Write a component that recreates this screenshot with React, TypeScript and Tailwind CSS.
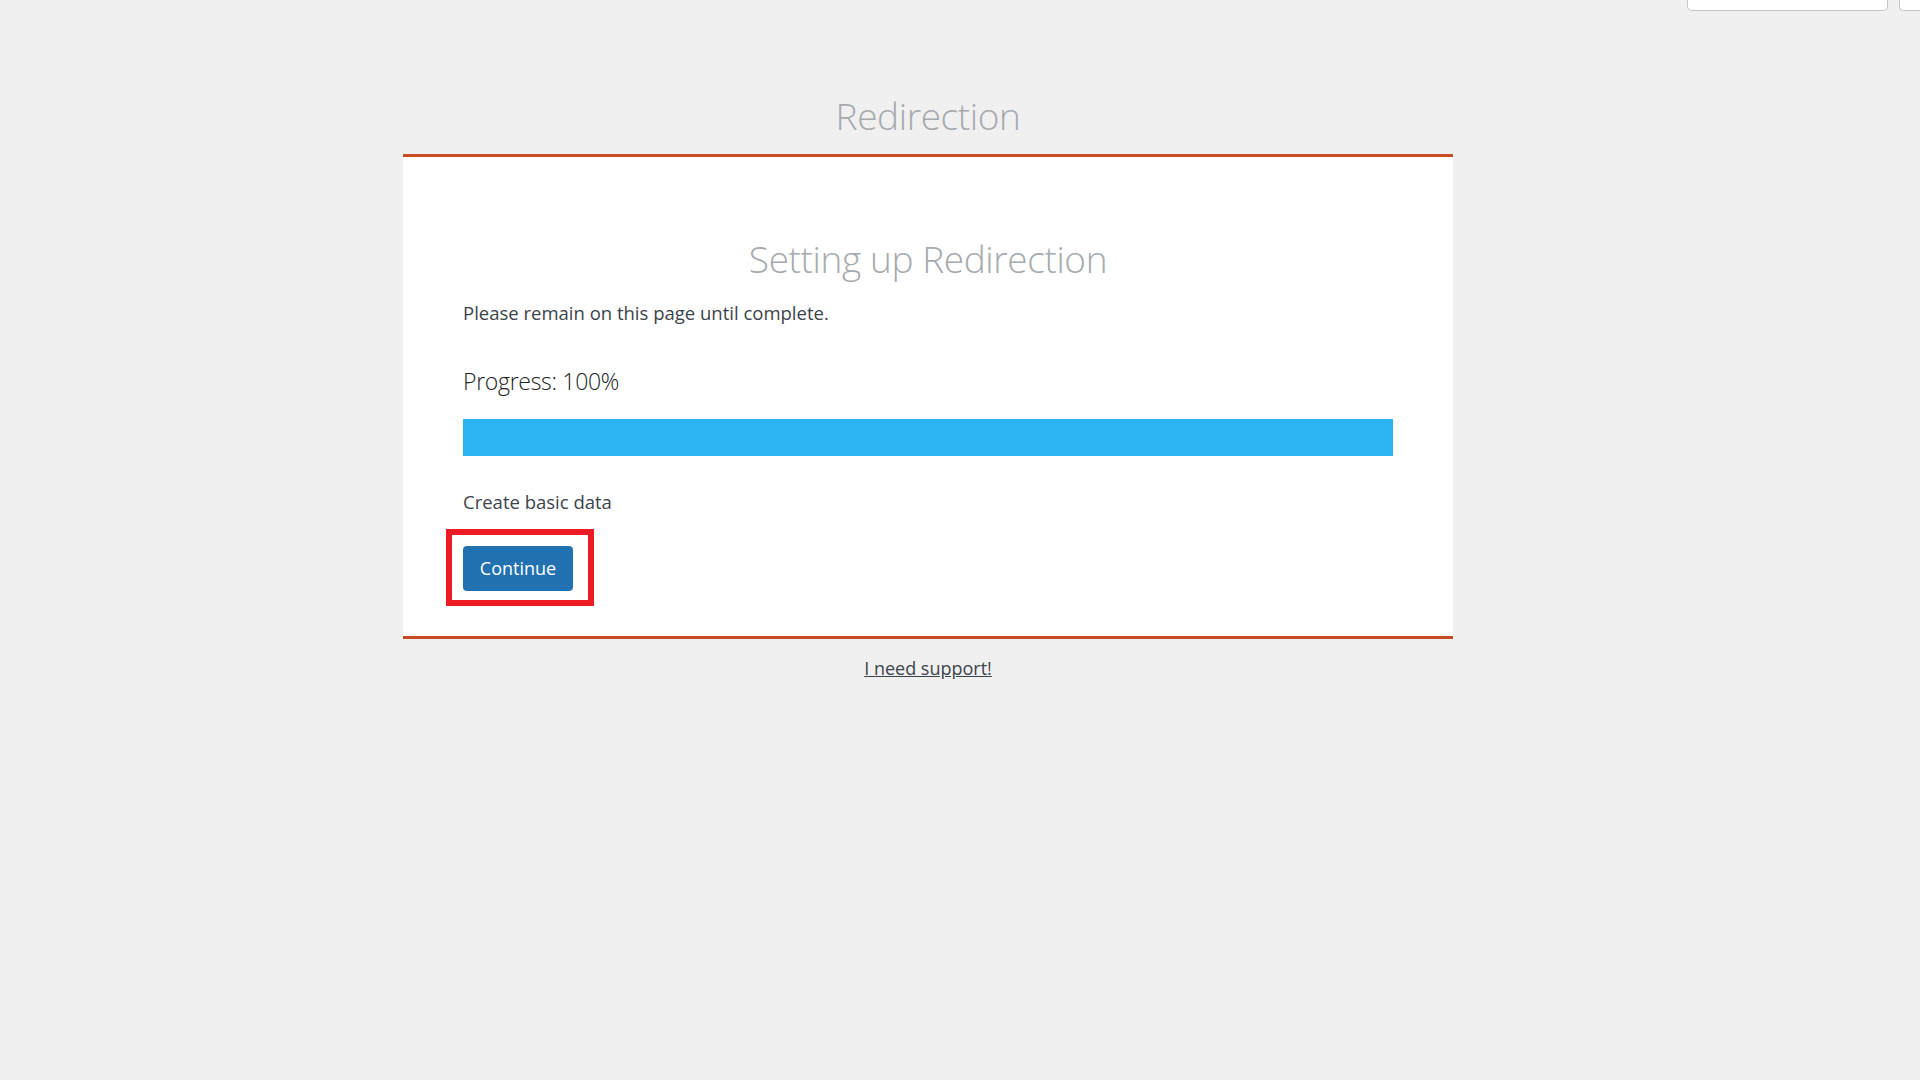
const font = { fontFamily: '"Open Sans", "Noto Sans", sans-serif' };

const App = () => {
  return (
    <div className="min-h-screen w-full bg-[#f0f0f1] text-[#3c434a]" style={font}>
      {/* screen option tabs, cut off at the top */}
      <div className="flex justify-end gap-[11px] h-0">
        <div className="w-[201px] h-[11px] bg-white border-x border-b border-[#c3c4c7] rounded-b-[5px]" />
        <div className="w-[21px] h-[11px] bg-white border-l border-b border-[#c3c4c7] rounded-bl-[5px]" />
      </div>

      <div className="ml-[403px] w-[1050px] pt-[92px]">
        <h1 className="text-center text-[37px] leading-[48px] tracking-[-0.4px] font-light text-[#a7aaad] mb-[14px]">
          Redirection
        </h1>

        <div className="bg-white border-y-[3px] border-[#c94a24] px-[60px] pt-[78px] pb-[45px]">
          <h2 className="text-center text-[37px] leading-[48px] tracking-[-0.4px] font-light text-[#a7aaad]">
            Setting up Redirection
          </h2>
          <p className="mt-[17px] text-[18.5px] leading-[26px]">Please remain on this page until complete.</p>

          <h3 className="mt-[38px] text-[23px] leading-[34px] tracking-[-0.3px] font-light text-[#1d2327]">
            Progress: 100%
          </h3>
          <div className="mt-[21px] h-[37px] w-full bg-[#f0f0f1]">
            <div className="h-full bg-[#2db5f3]" style={{ width: '100%' }} />
          </div>

          <p className="mt-[33px] text-[18.5px] leading-[26px]">Create basic data</p>

          <div className="mt-[31px] relative inline-block">
            <button className="h-[45px] w-[110px] rounded-[4px] bg-[#2271b1] text-white text-[18px] leading-[45px]">
              Continue
            </button>
            <div className="absolute -left-[17px] -top-[17px] w-[148px] h-[77px] border-[6px] border-[#ed1c24] pointer-events-none" />
          </div>
        </div>

        <div className="mt-[16px] text-center">
          <a href="#" className="text-[18px] leading-[26px] underline text-[#3c434a]">I need support!</a>
        </div>
      </div>
    </div>
  );
};

export default App;
